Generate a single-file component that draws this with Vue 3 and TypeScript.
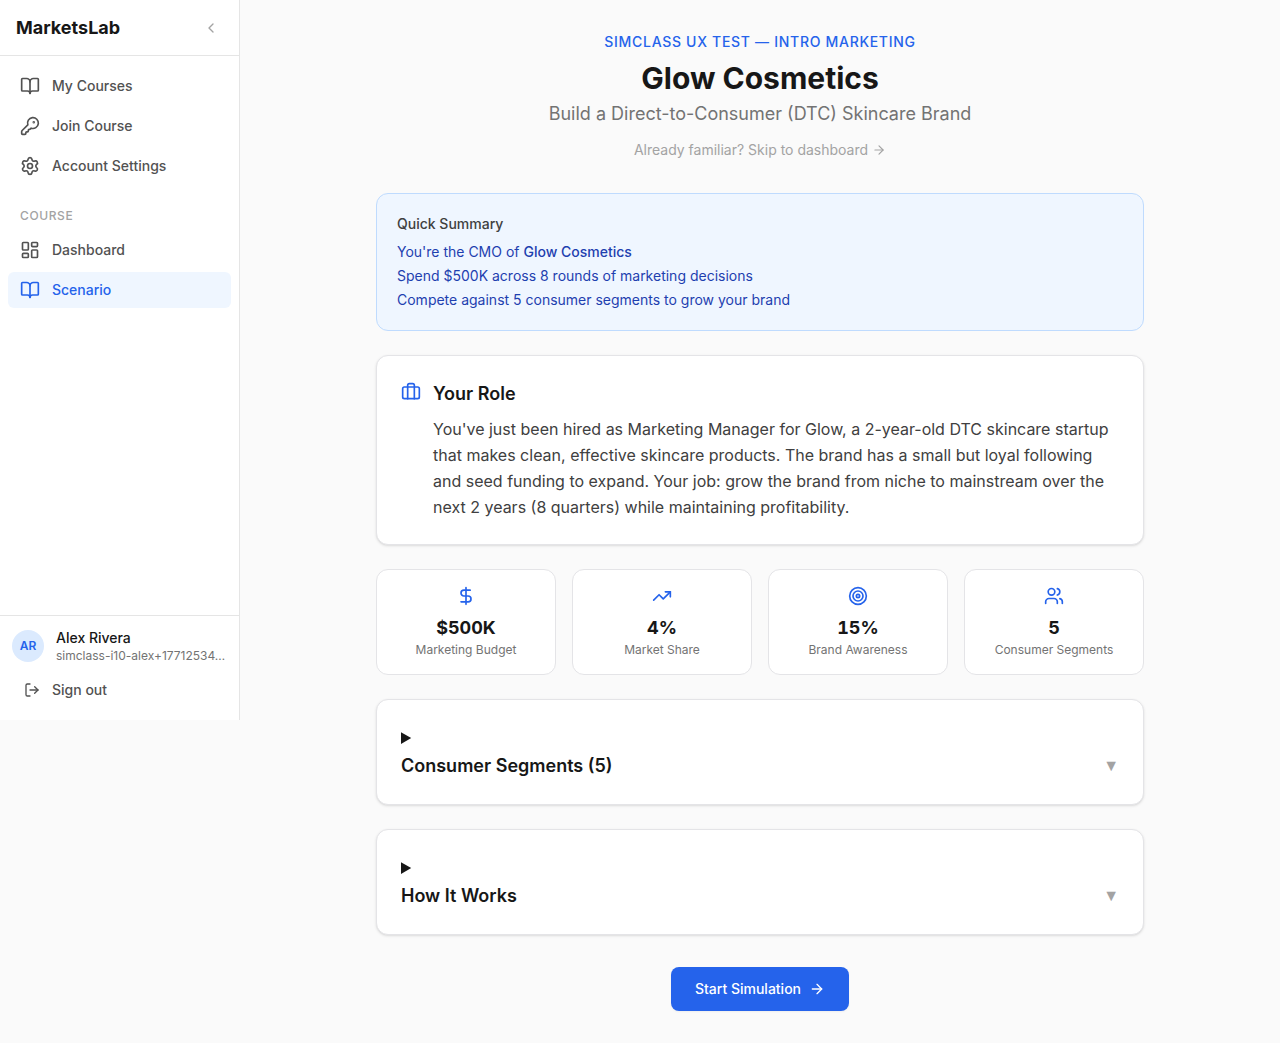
<script setup lang="ts">
import { ref } from 'vue'

interface NavItem {
  label: string
  icon: string
  active?: boolean
}

interface Stat {
  icon: string
  value: string
  label: string
}

const icons: Record<string, string> = {
  book: '<path d="M12 7v14"/><path d="M3 18a1 1 0 0 1-1-1V4a1 1 0 0 1 1-1h5a4 4 0 0 1 4 4 4 4 0 0 1 4-4h5a1 1 0 0 1 1 1v13a1 1 0 0 1-1 1h-6a3 3 0 0 0-3 3 3 3 0 0 0-3-3z"/>',
  key: '<path d="M2.586 17.414A2 2 0 0 0 2 18.828V21a1 1 0 0 0 1 1h3a1 1 0 0 0 1-1v-1a1 1 0 0 1 1-1h1a1 1 0 0 0 1-1v-1a1 1 0 0 1 1-1h.172a2 2 0 0 0 1.414-.586l.814-.814a6.5 6.5 0 1 0-4-4z"/><circle cx="16.5" cy="7.5" r=".5" fill="currentColor"/>',
  settings: '<path d="M9.671 4.136a2.34 2.34 0 0 1 4.659 0 2.34 2.34 0 0 0 3.319 1.915 2.34 2.34 0 0 1 2.33 4.033 2.34 2.34 0 0 0 0 3.831 2.34 2.34 0 0 1-2.33 4.033 2.34 2.34 0 0 0-3.319 1.915 2.34 2.34 0 0 1-4.659 0 2.34 2.34 0 0 0-3.32-1.915 2.34 2.34 0 0 1-2.33-4.033 2.34 2.34 0 0 0 0-3.831A2.34 2.34 0 0 1 6.35 6.051a2.34 2.34 0 0 0 3.319-1.915"/><circle cx="12" cy="12" r="3"/>',
  dashboard: '<rect width="7" height="9" x="3" y="3" rx="1"/><rect width="7" height="5" x="14" y="3" rx="1"/><rect width="7" height="9" x="14" y="12" rx="1"/><rect width="7" height="5" x="3" y="16" rx="1"/>',
  chevron: '<path d="m15 18-6-6 6-6"/>',
  logout: '<path d="m16 17 5-5-5-5"/><path d="M21 12H9"/><path d="M9 21H5a2 2 0 0 1-2-2V5a2 2 0 0 1 2-2h4"/>',
  arrow: '<path d="M5 12h14"/><path d="m12 5 7 7-7 7"/>',
  luggage: '<path d="M16 20V4a2 2 0 0 0-2-2h-4a2 2 0 0 0-2 2v16"/><rect width="20" height="14" x="2" y="6" rx="2"/>',
  dollar: '<path d="M12 2v20"/><path d="M17 5H9.5a3.5 3.5 0 0 0 0 7h5a3.5 3.5 0 0 1 0 7H6"/>',
  trend: '<path d="M16 7h6v6"/><path d="m22 7-8.5 8.5-5-5L2 17"/>',
  target: '<circle cx="12" cy="12" r="10"/><circle cx="12" cy="12" r="6"/><circle cx="12" cy="12" r="2"/>',
  users: '<path d="M16 21v-2a4 4 0 0 0-4-4H6a4 4 0 0 0-4 4v2"/><path d="M16 3.128a4 4 0 0 1 0 7.744"/><path d="M22 21v-2a4 4 0 0 0-3-3.87"/><circle cx="9" cy="7" r="4"/>',
}

const mainNav: NavItem[] = [
  { label: 'My Courses', icon: 'book' },
  { label: 'Join Course', icon: 'key' },
  { label: 'Account Settings', icon: 'settings' },
]

const courseNav: NavItem[] = [
  { label: 'Dashboard', icon: 'dashboard' },
  { label: 'Scenario', icon: 'book', active: true },
]

const stats: Stat[] = [
  { icon: 'dollar', value: '$500K', label: 'Marketing Budget' },
  { icon: 'trend', value: '4%', label: 'Market Share' },
  { icon: 'target', value: '15%', label: 'Brand Awareness' },
  { icon: 'users', value: '5', label: 'Consumer Segments' },
]

const sections = ref<string[]>(['Consumer Segments (5)', 'How It Works'])
</script>

<template>
  <div class="app">
    <aside class="sidebar">
      <div class="brand">
        <span class="brand-name">MarketsLab</span>
        <button class="collapse" type="button" aria-label="Collapse sidebar">
          <svg class="icon small" viewBox="0 0 24 24" v-html="icons.chevron"></svg>
        </button>
      </div>

      <nav class="nav">
        <a v-for="item in mainNav" :key="item.label" href="#" class="nav-item">
          <svg class="icon" viewBox="0 0 24 24" v-html="icons[item.icon]"></svg>
          <span>{{ item.label }}</span>
        </a>
        <h2 class="nav-heading">Course</h2>
        <a
          v-for="item in courseNav"
          :key="item.label"
          href="#"
          class="nav-item"
          :class="{ active: item.active }"
          :aria-current="item.active ? 'page' : undefined"
        >
          <svg class="icon" viewBox="0 0 24 24" v-html="icons[item.icon]"></svg>
          <span>{{ item.label }}</span>
        </a>
      </nav>

      <div class="account">
        <div class="user">
          <span class="avatar">AR</span>
          <div class="user-text">
            <div class="user-name">Alex Rivera</div>
            <div class="user-email">simclass-i10-alex+17712534…</div>
          </div>
        </div>
        <button class="nav-item sign-out" type="button">
          <svg class="icon small" viewBox="0 0 24 24" v-html="icons.logout"></svg>
          <span>Sign out</span>
        </button>
      </div>
    </aside>

    <main class="main">
      <div class="content">
        <header class="intro">
          <p class="eyebrow">SimClass UX Test — Intro Marketing</p>
          <h1>Glow Cosmetics</h1>
          <p class="tagline">Build a Direct-to-Consumer (DTC) Skincare Brand</p>
          <a href="#" class="skip">
            <span>Already familiar? Skip to dashboard</span>
            <svg class="icon tiny" viewBox="0 0 24 24" v-html="icons.arrow"></svg>
          </a>
        </header>

        <section class="quick">
          <h2>Quick Summary</h2>
          <ul>
            <li>You're the CMO of <strong>Glow Cosmetics</strong></li>
            <li>Spend $500K across 8 rounds of marketing decisions</li>
            <li>Compete against 5 consumer segments to grow your brand</li>
          </ul>
        </section>

        <section class="card role">
          <svg class="icon blue" viewBox="0 0 24 24" v-html="icons.luggage"></svg>
          <div>
            <h2>Your Role</h2>
            <p>
              You've just been hired as Marketing Manager for Glow, a 2-year-old DTC skincare startup
              that makes clean, effective skincare products. The brand has a small but loyal following
              and seed funding to expand. Your job: grow the brand from niche to mainstream over the
              next 2 years (8 quarters) while maintaining profitability.
            </p>
          </div>
        </section>

        <div class="stats">
          <div v-for="stat in stats" :key="stat.label" class="stat">
            <svg class="icon blue" viewBox="0 0 24 24" v-html="icons[stat.icon]"></svg>
            <div class="stat-value">{{ stat.value }}</div>
            <div class="stat-label">{{ stat.label }}</div>
          </div>
        </div>

        <details v-for="title in sections" :key="title" class="card">
          <summary>
            <div class="summary-row">
              <span>{{ title }}</span>
              <span class="caret">▼</span>
            </div>
          </summary>
        </details>

        <button class="start" type="button">
          <span>Start Simulation</span>
          <svg class="icon small" viewBox="0 0 24 24" v-html="icons.arrow"></svg>
        </button>
      </div>
    </main>
  </div>
</template>

<style>
body {
  margin: 0;
  background: #fafafa;
}
</style>

<style scoped>
.app {
  display: flex;
  align-items: flex-start;
  font-family: Inter, "Liberation Sans", sans-serif;
  font-size: 14px;
  line-height: 20px;
  color: #171717;
}

.app * {
  box-sizing: border-box;
}

h1,
h2,
p,
ul {
  margin: 0;
  padding: 0;
}

a {
  text-decoration: none;
}

button {
  border: 0;
  background: none;
  font: inherit;
  cursor: pointer;
}

.icon {
  display: block;
  flex: none;
  width: 20px;
  height: 20px;
  fill: none;
  stroke: currentColor;
  stroke-width: 2;
  stroke-linecap: round;
  stroke-linejoin: round;
}

.icon.small {
  width: 16px;
  height: 16px;
}

.icon.tiny {
  width: 14px;
  height: 14px;
}

.icon.blue {
  color: #2563eb;
}

.sidebar {
  display: flex;
  flex: none;
  flex-direction: column;
  width: 240px;
  height: 720px;
  border-right: 1px solid #e5e5e5;
  background: #fff;
}

.brand {
  display: flex;
  align-items: center;
  justify-content: space-between;
  height: 56px;
  padding: 0 16px;
  border-bottom: 1px solid #e5e5e5;
}

.brand-name {
  font-size: 18px;
  font-weight: 700;
  line-height: 28px;
}

.collapse {
  padding: 4px;
  color: #a3a3a3;
}

.nav {
  display: flex;
  flex: 1;
  flex-direction: column;
  gap: 4px;
  padding: 12px 8px;
}

.nav-item {
  display: flex;
  align-items: center;
  gap: 12px;
  padding: 8px 12px;
  border-radius: 6px;
  font-weight: 500;
  color: #525252;
}

.nav-item.active {
  background: #eff6ff;
  color: #2563eb;
}

.nav-heading {
  padding: 20px 12px 4px;
  font-size: 12px;
  font-weight: 500;
  line-height: 16px;
  letter-spacing: 0.05em;
  text-transform: uppercase;
  color: #a3a3a3;
}

.account {
  padding: 12px;
  border-top: 1px solid #e5e5e5;
}

.user {
  display: flex;
  align-items: center;
  gap: 12px;
}

.avatar {
  display: flex;
  flex: none;
  align-items: center;
  justify-content: center;
  width: 32px;
  height: 32px;
  border-radius: 50%;
  background: #dbeafe;
  font-size: 12px;
  font-weight: 600;
  color: #2563eb;
}

.user-text {
  min-width: 0;
}

.user-name {
  font-weight: 500;
}

.user-email {
  font-size: 12px;
  line-height: 16px;
  white-space: nowrap;
  color: #737373;
}

.sign-out {
  width: 100%;
  margin-top: 8px;
}

.main {
  flex: 1;
  min-width: 0;
  padding: 32px;
}

.content {
  display: flex;
  flex-direction: column;
  gap: 24px;
  max-width: 768px;
  margin: 0 auto;
}

.intro {
  display: flex;
  flex-direction: column;
  align-items: center;
  margin-bottom: 9px;
  text-align: center;
}

.eyebrow {
  font-weight: 500;
  letter-spacing: 0.05em;
  text-transform: uppercase;
  color: #2563eb;
}

h1 {
  margin: 8px 0 4px;
  font-size: 30px;
  font-weight: 700;
  line-height: 36px;
}

.tagline {
  font-size: 18px;
  line-height: 28px;
  color: #737373;
}

.skip {
  display: flex;
  align-items: center;
  gap: 4px;
  margin-top: 12px;
  color: #a3a3a3;
}

.quick {
  padding: 20px;
  border: 1px solid #bfdbfe;
  border-radius: 12px;
  background: #eff6ff;
  color: #1e40af;
}

.quick h2 {
  margin-bottom: 8px;
  font-size: 14px;
  font-weight: 500;
  color: #404040;
}

.quick ul {
  display: flex;
  flex-direction: column;
  gap: 4px;
  list-style: none;
}

.quick strong {
  font-weight: 500;
}

.card {
  padding: 24px;
  border: 1px solid #e4e4e7;
  border-radius: 12px;
  background: #fff;
  box-shadow: 0 1px 3px rgba(0, 0, 0, 0.1), 0 1px 2px -1px rgba(0, 0, 0, 0.1);
}

.role {
  display: flex;
  gap: 12px;
}

.role .icon {
  margin-top: 2px;
}

.role h2 {
  margin-bottom: 8px;
  font-size: 18px;
  font-weight: 600;
  line-height: 28px;
}

.role p {
  font-size: 16px;
  line-height: 26px;
  color: #404040;
}

.stats {
  display: grid;
  grid-template-columns: repeat(4, 1fr);
  gap: 16px;
}

.stat {
  display: flex;
  flex-direction: column;
  align-items: center;
  padding: 16px;
  border: 1px solid #e4e4e7;
  border-radius: 12px;
  background: #fff;
}

.stat-value {
  margin-top: 8px;
  font-size: 18px;
  font-weight: 700;
  line-height: 28px;
  font-variant-numeric: tabular-nums;
}

.stat-label {
  font-size: 12px;
  line-height: 16px;
  color: #737373;
}

summary {
  font-size: 18px;
  font-weight: 600;
  line-height: 28px;
  cursor: pointer;
}

.summary-row {
  display: flex;
  align-items: center;
  justify-content: space-between;
}

.caret {
  font-family: "Liberation Sans", sans-serif;
  font-size: 16px;
  font-weight: 400;
  color: #a3a3a3;
}

.start {
  display: flex;
  align-items: center;
  align-self: center;
  gap: 8px;
  margin-top: 8px;
  padding: 12px 24px;
  border-radius: 8px;
  background: #2563eb;
  box-shadow: 0 1px 2px rgba(0, 0, 0, 0.05);
  font-weight: 500;
  color: #fff;
}
</style>
